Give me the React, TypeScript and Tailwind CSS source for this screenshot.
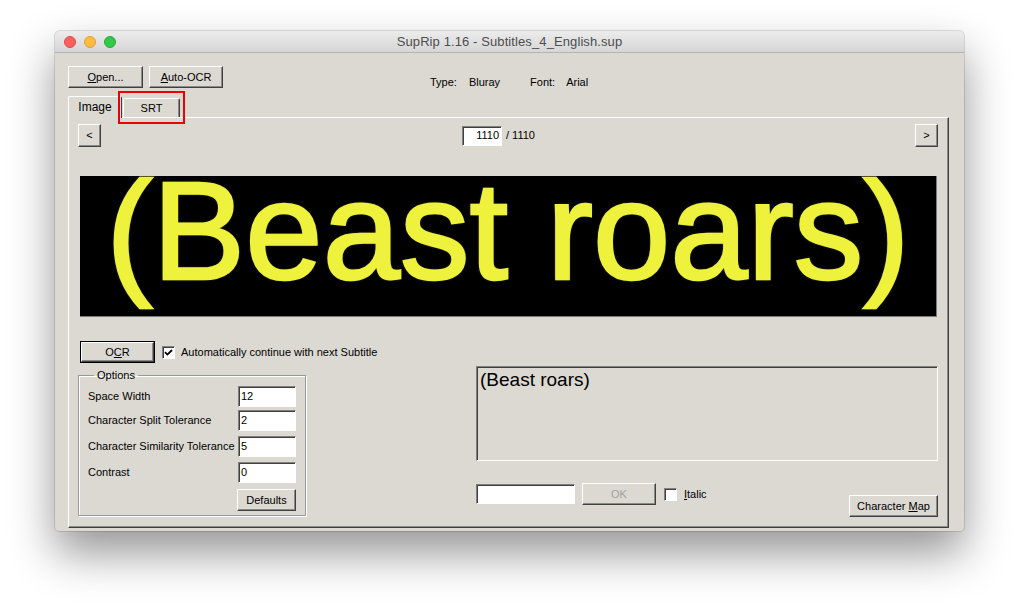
import React from 'react';

const font = { fontFamily: '"Liberation Sans", Arial, sans-serif' };

const raised =
  'border border-t-white border-l-white border-r-[#404040] border-b-[#404040] shadow-[inset_-1px_-1px_0_#8a8a8a] bg-[#dcd9d3]';
const sunken =
  'border border-t-[#808080] border-l-[#808080] border-r-white border-b-white shadow-[inset_1px_1px_0_#404040] bg-white';

const Btn = ({ className = '', children }: { className?: string; children: React.ReactNode }) => (
  <div className={`${raised} flex items-center justify-center text-[11px] text-black ${className}`}>{children}</div>
);

const Check = ({ checked }: { checked?: boolean }) => (
  <div className={`${sunken} w-[13px] h-[13px] flex items-center justify-center`}>
    {checked && (
      <svg width="9" height="9" viewBox="0 0 9 9">
        <path d="M1 4.2 L3.4 6.6 L8 2" stroke="#000" strokeWidth="1.8" fill="none" />
      </svg>
    )}
  </div>
);

const OptionRow = ({ label, value, className = '' }: { label: string; value: string; className?: string }) => (
  <div className={`flex items-center justify-between ${className}`}>
    <span className="text-[11px] text-black">{label}</span>
    <div className={`${sunken} w-[58px] h-[21px] flex items-center pl-[2px] text-[11px]`}>{value}</div>
  </div>
);

const App = () => {
  return (
    <div className="w-[1020px] h-[612px] bg-white overflow-hidden pl-[55px] pt-[31px]" style={font}>
      <div className="w-[909px] h-[500px] rounded-t-[5px] rounded-b-[4px] bg-[#dcd9d3] flex flex-col shadow-[0_22px_45px_rgba(0,0,0,0.42),0_0_0_1px_rgba(0,0,0,0.12)]">
        {/* title bar */}
        <div className="h-[22px] rounded-t-[5px] bg-gradient-to-b from-[#ececec] to-[#d6d6d6] border-b border-[#b4b4b4] flex items-center relative">
          <div className="flex items-center gap-[8px] pl-[9px]">
            <div className="w-[12px] h-[12px] rounded-full bg-[#fc605c] border border-[#de4a44]" />
            <div className="w-[12px] h-[12px] rounded-full bg-[#fdbc40] border border-[#de9f34]" />
            <div className="w-[12px] h-[12px] rounded-full bg-[#34c84a] border border-[#27aa35]" />
          </div>
          <div className="flex-1 text-center text-[13px] tracking-[0.1px] text-[#4d4d4d] -ml-[61px] pt-[1px]">
            SupRip 1.16 - Subtitles_4_English.sup
          </div>
        </div>

        <div className="flex-1 pl-[13px] pt-[13px]">
          {/* top row */}
          <div className="flex items-start">
            <Btn className="w-[75px] h-[22px]">
              <span><u>O</u>pen...</span>
            </Btn>
            <Btn className="w-[74px] h-[22px] ml-[6px]">
              <span><u>A</u>uto-OCR</span>
            </Btn>
            <div className="flex text-[11px] text-black ml-[207px] mt-[10px] leading-[13px]">
              <span>Type:</span>
              <span className="ml-[12px]">Bluray</span>
              <span className="ml-[30px]">Font:</span>
              <span className="ml-[11px]">Arial</span>
            </div>
          </div>

          {/* tabs */}
          <div className="flex items-start h-[21px] mt-[7px] relative">
            <div className="w-[54px] h-[22px] border-t border-l border-t-white border-l-white border-r border-r-[#404040] rounded-t-[2px] bg-[#dcd9d3] z-10 flex items-center justify-center pb-[2px] text-[12px] text-black">
              Image
            </div>
            <div className="w-[57px] h-[19px] mt-[2px] ml-[1px] border-t border-l border-t-white border-l-white border-r border-r-[#404040] shadow-[inset_-1px_0_0_#8a8a8a] rounded-t-[2px] flex items-center justify-center text-[11px] text-black">
              SRT
            </div>
            <div className="absolute left-[50px] -top-[5px] w-[67px] h-[33px] border-2 border-[#f00000] z-20" />
          </div>

          {/* panel */}
          <div className="w-[881px] h-[411px] border border-t-white border-l-white border-r-[#404040] border-b-[#404040] shadow-[inset_-1px_-1px_0_#8a8a8a] pl-[9px] pr-[10px] pt-[6px]">
            <div className="flex items-center h-[23px]">
              <Btn className="w-[23px] h-[23px]">&lt;</Btn>
              <div className={`${sunken} w-[40px] h-[20px] ml-[361px] flex items-center justify-end pr-[2px] text-[11px]`}>1110</div>
              <span className="text-[11px] ml-[4px]">/ 1110</span>
              <Btn className="w-[23px] h-[23px] ml-auto">&gt;</Btn>
            </div>

            <div className="w-[857px] h-[141px] ml-[2px] mt-[29px] bg-black border-r border-b border-[#7a7a7a] flex items-center justify-center pb-[32px]">
              <span className="text-[139px] leading-none text-[#eef23c] whitespace-nowrap [-webkit-text-stroke:2.5px_#eef23c] [text-shadow:0_0_3px_#8a8e1c]">
                (Beast roars)
              </span>
            </div>

            <div className="flex mt-[24px]">
              {/* left column */}
              <div className="w-[398px] flex flex-col">
                <div className="flex items-center h-[22px] ml-[2px]">
                  <div className="w-[75px] h-[22px] border border-black">
                    <Btn className="w-full h-full">
                      <span>O<u>C</u>R</span>
                    </Btn>
                  </div>
                  <div className="ml-[7px]"><Check checked /></div>
                  <span className="ml-[6px] text-[11px] whitespace-nowrap">Automatically continue with next Subtitle</span>
                </div>

                <fieldset className="w-[228px] h-[147px] mt-[6px] border border-[#9a9a9a] shadow-[1px_1px_0_white,inset_1px_1px_0_white] pl-[9px] pr-[9px]">
                  <legend className="ml-[6px] px-[3px] text-[11px] leading-[13px]">Options</legend>
                  <OptionRow label="Space Width" value="12" className="mt-[4px]" />
                  <OptionRow label="Character Split Tolerance" value="2" className="mt-[3px]" />
                  <OptionRow label="Character Similarity Tolerance" value="5" className="mt-[5px]" />
                  <OptionRow label="Contrast" value="0" className="mt-[5px]" />
                  <div className="flex justify-end mt-[6px]">
                    <Btn className="w-[59px] h-[22px]">Defaults</Btn>
                  </div>
                </fieldset>
              </div>

              {/* right column */}
              <div className="w-[462px] mt-[25px] flex flex-col">
                <div className="h-[95px] border border-t-[#808080] border-l-[#808080] border-r-white border-b-white shadow-[inset_1px_1px_0_#404040] pl-[3px] pt-[2px] text-[19px] text-black leading-[22px]">
                  (Beast roars)
                </div>
                <div className="flex items-start mt-[22px]">
                  <div className={`${sunken} w-[99px] h-[20px] mt-[1px]`} />
                  <Btn className="w-[74px] h-[22px] ml-[7px] !text-[#a0a0a0]">OK</Btn>
                  <div className="ml-[8px] mt-[5px]"><Check /></div>
                  <span className="ml-[7px] mt-[5px] text-[11px] leading-[13px]"><u>I</u>talic</span>
                  <Btn className="w-[89px] h-[22px] ml-auto mt-[12px]">
                    <span>Character <u>M</u>ap</span>
                  </Btn>
                </div>
              </div>
            </div>
          </div>
        </div>
      </div>
    </div>
  );
};

export default App;
